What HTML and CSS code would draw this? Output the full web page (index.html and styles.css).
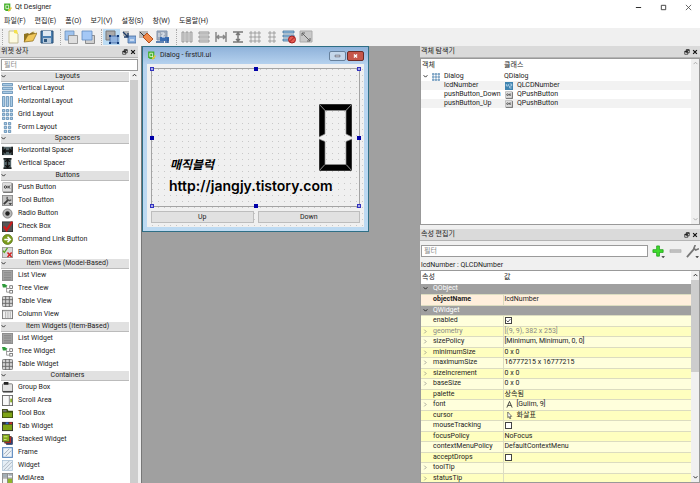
FILE: index.html
```html
<!DOCTYPE html>
<html lang="ko">
  <head>
    <meta charset="UTF-8" />
    <meta name="viewport" content="width=device-width, initial-scale=1.0" />
    <title>Qt Designer</title>
    <link rel="stylesheet" href="styles.css">
  </head>

  <body>
    <!-- shared icons -->
    <svg class="sprite" aria-hidden="true">
      <symbol id="i-qt" viewBox="0 0 16 16">
        <path d="M2 1h11v13H5l-3-3z" fill="#43b02a" />
        <path d="M5 4h5v6H5zM9 9l2 3" fill="none" stroke="#e8f7e0" stroke-width="1.5" />
        <path d="M9 13l5-6 2 2-5 6H9z" fill="#e8c93a" />
      </symbol>
      <symbol id="i-float" viewBox="0 0 8 8">
        <path d="M3 1h4v4H3zM1 3h4v4H1z" fill="#fff" stroke="#222" />
        <path d="M3 1.5h4M1 3.5h4" stroke="#222" stroke-width="1.5" />
      </symbol>
      <symbol id="i-close" viewBox="0 0 8 8"><path d="M1.5 1.5l5 5M6.5 1.5l-5 5" stroke="#111" stroke-width="1.6" /></symbol>
      <symbol id="i-down" viewBox="0 0 8 8"><path d="M1 2l3 3 3-3" fill="none" stroke="currentColor" stroke-width="1.5" /></symbol>
      <symbol id="i-up" viewBox="0 0 8 8"><path d="M1 5l3-3 3 3" fill="none" stroke="currentColor" stroke-width="1.5" /></symbol>
      <symbol id="i-right" viewBox="0 0 8 8"><path d="M2 1l3 3-3 3" fill="none" stroke="currentColor" /></symbol>

      <symbol id="i-vlayout" viewBox="0 0 12 12">
        <path d="M.5 .5h11v2.5H.5zM.5 4.7h11v2.5H.5zM.5 9h11v2.5H.5z" fill="#a9cbe6" stroke="#4f7fa8" stroke-width=".8" />
      </symbol>
      <symbol id="i-hlayout" viewBox="0 0 12 12">
        <path d="M.5 .5h2.5v11H.5zM4.7 .5h2.5v11H4.7zM9 .5h2.5v11H9z" fill="#a9cbe6" stroke="#4f7fa8" stroke-width=".8" />
      </symbol>
      <symbol id="i-grid" viewBox="0 0 12 12">
        <path d="M.5 .5H3V3H.5zM4.7 .5h2.5V3H4.7zM9 .5h2.5V3H9zM.5 4.7H3v2.5H.5zM4.7 4.7h2.5v2.5H4.7zM9 4.7h2.5v2.5H9zM.5 9H3v2.5H.5zM4.7 9h2.5v2.5H4.7zM9 9h2.5v2.5H9z" fill="#a9cbe6" stroke="#4f7fa8" stroke-width=".8" />
      </symbol>
      <symbol id="i-form" viewBox="0 0 12 12">
        <path d="M2.5 .5H5V3H2.5zM7 .5h2.5V3H7zM2.5 4.7H5v2.5H2.5zM7 4.7h2.5v2.5H7zM2.5 9H5v2.5H2.5zM7 9h2.5v2.5H7z" fill="#a9cbe6" stroke="#4f7fa8" stroke-width=".8" />
      </symbol>
      <symbol id="i-hspacer" viewBox="0 0 12 12">
        <path d="M0 2h12v9H0z" fill="#56666a" />
        <path d="M1 2v9M11 2v9M2 6.5h8M4 4L2 6.5 4 9M8 4l2 2.5L8 9" fill="none" stroke="#111" stroke-width="1.5" />
      </symbol>
      <symbol id="i-vspacer" viewBox="0 0 12 12">
        <path d="M2 0h8v12H2z" fill="#56666a" />
        <path d="M1.5 1h9M1.5 11h9M6 2v8M3.5 4L6 2l2.5 2M3.5 8L6 10l2.5-2" fill="none" stroke="#111" stroke-width="1.5" />
      </symbol>
      <symbol id="i-push" viewBox="0 0 12 12">
        <rect x="1" y="1" width="11" height="11" rx="1" fill="#777" />
        <rect x=".5" y=".5" width="10" height="10" rx="1" fill="#dedede" stroke="#999" stroke-width=".6" />
        <circle cx="3.8" cy="5.5" r="1.3" fill="none" stroke="#222" stroke-width=".9" />
        <path d="M6.5 4v3M9 4L7 5.5 9 7" fill="none" stroke="#222" stroke-width=".9" />
      </symbol>
      <symbol id="i-tool" viewBox="0 0 12 12">
        <rect x=".5" y=".5" width="11" height="11" fill="#c3c3c3" stroke="#8a8a8a" />
        <path d="M2 10l5-5" stroke="#3a3a3a" stroke-width="2" />
        <path d="M6 2a2.5 2.5 0 1 0 4 3" fill="none" stroke="#555" stroke-width="1.5" />
        <path d="M7 9h4l-2 2z" fill="#222" />
      </symbol>
      <symbol id="i-radio" viewBox="0 0 12 12">
        <circle cx="6" cy="6" r="5" fill="#b9b9b9" stroke="#7c7c7c" />
        <circle cx="6" cy="6" r="2.4" fill="#222" />
      </symbol>
      <symbol id="i-check" viewBox="0 0 12 12">
        <rect x=".5" y="1" width="11" height="10.5" fill="#555" stroke="#333" />
        <path d="M2 6l3 4 6-9" fill="none" stroke="#cf1b1b" stroke-width="2.4" />
      </symbol>
      <symbol id="i-command" viewBox="0 0 12 12">
        <circle cx="6" cy="6" r="5.5" fill="#7b9c1c" stroke="#4d6510" stroke-width=".7" />
        <path d="M2.5 6h6M6 3l3 3-3 3" fill="none" stroke="#fff" stroke-width="1.7" />
      </symbol>
      <symbol id="i-bbox" viewBox="0 0 12 12">
        <rect x=".5" y=".5" width="11" height="11" fill="#d8d8d8" stroke="#9a9a9a" />
        <path d="M1 4l1.5 2L6 1" fill="none" stroke="#57a51c" stroke-width="1.4" />
        <path d="M6 6l4.5 5M10.5 6L6 11" stroke="#d12222" stroke-width="1.6" />
      </symbol>
      <symbol id="i-list" viewBox="0 0 12 12">
        <rect x=".5" y=".5" width="11" height="11" fill="#a5a5a5" stroke="#8a8a8a" />
        <path d="M2 3h8M2 5.5h8M2 8h8M2 10h8" stroke="#7b7b7b" stroke-width=".8" />
      </symbol>
      <symbol id="i-tree" viewBox="0 0 12 12">
        <path d="M0 1h3l3 2-2 2H1z" fill="#2d9a3a" />
        <path d="M5 4v6h3M5 6h3" fill="none" stroke="#777" stroke-width=".8" />
        <rect x="8.5" y="3" width="3" height="3" fill="#fff" stroke="#555" stroke-width=".8" />
        <rect x="8.5" y="8" width="3" height="3" fill="#fff" stroke="#555" stroke-width=".8" />
      </symbol>
      <symbol id="i-table" viewBox="0 0 12 12">
        <rect x=".5" y=".5" width="11" height="11" rx="1" fill="#d2d2d2" stroke="#777" />
        <path d="M4 0v12M8 0v12M0 4h12M0 8h12" stroke="#666" />
      </symbol>
      <symbol id="i-column" viewBox="0 0 12 12">
        <rect x=".5" y="1.5" width="11" height="9" fill="#f1f1f1" stroke="#777" />
        <path d="M4 3v7M6.5 3v7M9 3v7" stroke="#aaa" />
        <path d="M1 2h10" stroke="#999" />
      </symbol>
      <symbol id="i-group" viewBox="0 0 12 12">
        <rect x=".5" y="2" width="11" height="9" rx="1" fill="#e2e2e2" stroke="#777" />
        <path d="M2 0h5v3H2z" fill="#222" />
        <path d="M1 10.5h11" stroke="#444" stroke-width="1.5" />
      </symbol>
      <symbol id="i-scroll" viewBox="0 0 12 12">
        <rect x=".5" y=".5" width="11" height="11" fill="#f8f8f8" stroke="#666" />
        <path d="M8 1v10" stroke="#666" stroke-width=".8" />
        <path d="M9 4h2v4H9z" fill="#86ab22" />
      </symbol>
      <symbol id="i-toolbox" viewBox="0 0 12 12">
        <path d="M0 1h6l1 2h5v8H0z" fill="#3c4a10" />
        <path d="M1 2h4v2H1z" fill="#777" />
        <path d="M1 5h10v5H1z" fill="#7ea316" />
      </symbol>
      <symbol id="i-tab" viewBox="0 0 12 12">
        <path d="M0 1h12v10H0z" fill="#333" />
        <path d="M4 1.5h3v2H4z" fill="#2f66c8" /><path d="M8 1.5h3v2H8z" fill="#d12a2a" />
        <path d="M1 4h10v6H1z" fill="#7ea316" />
      </symbol>
      <symbol id="i-stacked" viewBox="0 0 12 12">
        <rect x="5" y="4" width="6.5" height="7.5" fill="#2a53b8" stroke="#222" stroke-width=".6" />
        <rect x="3" y="2.5" width="7" height="7.5" fill="#c9301f" stroke="#222" stroke-width=".6" />
        <rect x=".5" y=".5" width="7.5" height="8" fill="#83aa19" stroke="#333" stroke-width=".7" />
        <path d="M2 3h4M2 6h3" stroke="#d6e88a" />
      </symbol>
      <symbol id="i-frame" viewBox="0 0 12 12">
        <rect x=".7" y=".7" width="10.6" height="10.6" fill="#eef3f8" stroke="#5a87bd" stroke-width="1.2" />
        <path d="M2 8l6-6M4 10l6-6" stroke="#9aa6b3" />
      </symbol>
      <symbol id="i-widget" viewBox="0 0 12 12">
        <rect x=".5" y=".5" width="11" height="11" fill="#e6eef5" stroke="#a7bfd6" stroke-width=".8" />
        <path d="M1 8l7-7M2 11l9-9M6 11l5-5" stroke="#aab4be" />
      </symbol>
      <symbol id="i-mdi" viewBox="0 0 12 12">
        <rect x=".5" y=".5" width="11" height="11" fill="#f4f4f4" stroke="#888" />
        <path d="M1 1h5v4H1zM7 1h4v2H7z" fill="#a3aeb5" /><path d="M6 6h5v5H6z" fill="#8fb32b" />
        <path d="M6 1v10M1 5.5h10" stroke="#777" stroke-width=".8" />
      </symbol>
    </svg>

    <div class="app">
      <header class="titlebar">
        <svg class="icon-sm"><use href="#i-qt" /></svg>
        <h1>Qt Designer</h1>
        <div class="win-buttons">
          <button aria-label="최소화"><svg viewBox="0 0 8 8"><path d="M1 4h6" stroke="#111" /></svg></button>
          <button aria-label="최대화"><svg viewBox="0 0 8 8"><path d="M1.5 1.5h5v5h-5z" fill="none" stroke="#333" /></svg></button>
          <button aria-label="닫기"><svg viewBox="0 0 8 8"><path d="M1 1l6 6M7 1L1 7" stroke="#444" stroke-width=".9" /></svg></button>
        </div>
      </header>

      <nav class="menubar">
        <button>파일(F)</button>
        <button>편집(E)</button>
        <button>폼(O)</button>
        <button>보기(V)</button>
        <button>설정(S)</button>
        <button>창(W)</button>
        <button>도움말(H)</button>
      </nav>

      <div class="toolbar">
        <div class="tools">
          <button aria-label="새 폼"><svg viewBox="0 0 14 14"><path d="M3 1h6l3 3v9H3z" fill="#fdfbe0" stroke="#b5ae83" stroke-width=".8" /><path d="M8 0h3l1 4-4-1z" fill="#f3e14c" /></svg></button>
          <button aria-label="열기"><svg viewBox="0 0 14 14"><path d="M1 12V4l4-1 1 1 5-3 1 3z" fill="#8e7322" /><path d="M1 12l4-7 9-2-4 8z" fill="#efc75a" stroke="#8d6b1a" stroke-width=".7" /><path d="M9 2l4-2v3" fill="#f4f0d2" /></svg></button>
          <button aria-label="저장"><svg viewBox="0 0 14 14"><path d="M1 1h12v12H1z" fill="#4b7fb0" stroke="#274d73" /><path d="M3 1h8v5H3z" fill="#dfe9f2" /><path d="M3 8h8v5H3z" fill="#b5c8da" /><path d="M4 9h3v3H4z" fill="#30577d" /></svg></button>
        </div>
        <div class="tools">
          <button aria-label="뒤로 보내기"><svg viewBox="0 0 14 14"><path d="M1 1h9v9H1z" fill="#9fc3ee" stroke="#6a8fbd" stroke-width=".8" /><path d="M4.5 5.5h9v8h-9z" fill="#dedede" stroke="#888" stroke-width=".8" /></svg></button>
          <button aria-label="앞으로 가져오기"><svg viewBox="0 0 14 14"><path d="M4.5 5.5h9v8h-9z" fill="#d0d0d0" stroke="#777" stroke-width=".8" /><path d="M1 1h10v9H1z" fill="#a4c8f6" stroke="#5f8bc2" stroke-width=".8" /></svg></button>
        </div>
        <div class="tools">
          <button class="on" aria-label="위젯 편집"><svg viewBox="0 0 14 14"><path d="M1 1h9v9H1z" fill="#aaa" stroke="#777" /><path d="M5 6h8v7H5z" fill="#8fb2de" stroke="#3c62a0" stroke-width=".8" /><path d="M4 5h2v2H4zM12 5h2v2h-2zM4 12h2v2H4zM12 12h2v2h-2z" fill="#123a78" /></svg></button>
          <button aria-label="시그널/슬롯 편집"><svg viewBox="0 0 14 14"><path d="M1 1h6v5H1z" fill="#b8b8b8" /><path d="M6 6h8v7H6z" fill="#8ab0e0" stroke="#456a9c" stroke-width=".8" /><path d="M1 2l5 5M6 3v4H2" fill="none" stroke="#1e3b66" stroke-width="1.3" /><path d="M8 10h4" stroke="#fff" /></svg></button>
          <button aria-label="버디 편집"><svg viewBox="0 0 14 14"><path d="M0 1h9v7H0z" fill="#b9b9b9" /><path d="M4 7l4-4 6 6-4 4z" fill="#f08a4b" stroke="#b4501d" /><path d="M1 2l4 4" stroke="#333" /></svg></button>
          <button aria-label="탭 순서 편집"><svg viewBox="0 0 14 14"><path d="M1 1h10v9H1z" fill="#a0abba" stroke="#8296b1" /><path d="M4 7h9v4H4z" fill="#3c6fb4" /><path d="M0 12h8M12 8v5M9 12h3" stroke="#2f5f9f" stroke-width="1.5" /><path d="M3 3v4M5 3h3v2H6v2h3" fill="none" stroke="#e8eef6" /></svg></button>
        </div>
        <div class="tools">
          <button aria-label="수평 배치"><svg viewBox="0 0 14 14"><path d="M2 2h2v10H2zM6 2h2v10H6zM10 2h2v10h-2z" fill="#ddd" stroke="#999" /></svg></button>
          <button aria-label="수직 배치"><svg viewBox="0 0 14 14"><path d="M2 2h10v2H2zM2 6h10v2H2zM2 10h10v2H2z" fill="#ddd" stroke="#999" /></svg></button>
          <button aria-label="스플리터 수평 배치"><svg viewBox="0 0 14 14"><path d="M2 2v10M12 2v10M2 7h10M5 5L3 7l2 2M9 5l2 2-2 2" fill="none" stroke="#888" stroke-width="1.5" /></svg></button>
          <button aria-label="스플리터 수직 배치"><svg viewBox="0 0 14 14"><path d="M2 2h10M2 12h10M7 2v10M5 5l2-2 2 2M5 9l2 2 2-2" fill="none" stroke="#777" stroke-width="1.5" /></svg></button>
          <button aria-label="격자 배치"><svg viewBox="0 0 14 14"><path d="M2 2h2v2H2zM6 2h2v2H6zM10 2h2v2h-2zM2 6h2v2H2zM6 6h2v2H6zM10 6h2v2h-2zM2 10h2v2H2zM6 10h2v2H6zM10 10h2v2h-2z" fill="#ddd" stroke="#a5a5a5" /></svg></button>
          <button aria-label="폼 배치"><svg viewBox="0 0 14 14"><path d="M4 2h2v2H4zM8 2h2v2H8zM4 6h2v2H4zM8 6h2v2H8zM4 10h2v2H4zM8 10h2v2H8z" fill="#ddd" stroke="#a5a5a5" /></svg></button>
          <button aria-label="배치 해제"><svg viewBox="0 0 14 14"><path d="M1 1h11v2H1zM1 5h11v2H1zM1 9h11v2H1z" fill="#9cc4e4" stroke="#41719b" stroke-width=".8" /><circle cx="10" cy="9.5" r="3.5" fill="#e45a50" stroke="#a41f1f" /><path d="M7.5 12l5-5" stroke="#a41f1f" /></svg></button>
          <button aria-label="크기 조정"><svg viewBox="0 0 14 14"><path d="M1 1h12v11H1z" fill="#c9c9c9" stroke="#aaa" /><path d="M3 3l8 8M3 6V3h3M11 8v3H8" fill="none" stroke="#666" /></svg></button>
        </div>
      </div>

      <main class="workspace">
        <aside class="dock widget-box">
          <div class="dock-title">
            <h2>위젯 상자</h2>
            <button aria-label="분리"><svg><use href="#i-float" /></svg></button>
            <button aria-label="닫기"><svg><use href="#i-close" /></svg></button>
          </div>
          <input class="filter" type="text" placeholder="필터" aria-label="위젯 필터" />
          <div class="scroll-row">
            <div class="categories">
              <button class="category"><svg><use href="#i-down" /></svg><span>Layouts</span></button>
              <ul>
                <li><svg><use href="#i-vlayout" /></svg>Vertical Layout</li>
                <li><svg><use href="#i-hlayout" /></svg>Horizontal Layout</li>
                <li><svg><use href="#i-grid" /></svg>Grid Layout</li>
                <li><svg><use href="#i-form" /></svg>Form Layout</li>
              </ul>
              <button class="category"><svg><use href="#i-down" /></svg><span>Spacers</span></button>
              <ul>
                <li><svg><use href="#i-hspacer" /></svg>Horizontal Spacer</li>
                <li><svg><use href="#i-vspacer" /></svg>Vertical Spacer</li>
              </ul>
              <button class="category"><svg><use href="#i-down" /></svg><span>Buttons</span></button>
              <ul>
                <li><svg><use href="#i-push" /></svg>Push Button</li>
                <li><svg><use href="#i-tool" /></svg>Tool Button</li>
                <li><svg><use href="#i-radio" /></svg>Radio Button</li>
                <li><svg><use href="#i-check" /></svg>Check Box</li>
                <li><svg><use href="#i-command" /></svg>Command Link Button</li>
                <li><svg><use href="#i-bbox" /></svg>Button Box</li>
              </ul>
              <button class="category"><svg><use href="#i-down" /></svg><span>Item Views (Model-Based)</span></button>
              <ul>
                <li><svg><use href="#i-list" /></svg>List View</li>
                <li><svg><use href="#i-tree" /></svg>Tree View</li>
                <li><svg><use href="#i-table" /></svg>Table View</li>
                <li><svg><use href="#i-column" /></svg>Column View</li>
              </ul>
              <button class="category"><svg><use href="#i-down" /></svg><span>Item Widgets (Item-Based)</span></button>
              <ul>
                <li><svg><use href="#i-list" /></svg>List Widget</li>
                <li><svg><use href="#i-tree" /></svg>Tree Widget</li>
                <li><svg><use href="#i-table" /></svg>Table Widget</li>
              </ul>
              <button class="category"><svg><use href="#i-down" /></svg><span>Containers</span></button>
              <ul>
                <li><svg><use href="#i-group" /></svg>Group Box</li>
                <li><svg><use href="#i-scroll" /></svg>Scroll Area</li>
                <li><svg><use href="#i-toolbox" /></svg>Tool Box</li>
                <li><svg><use href="#i-tab" /></svg>Tab Widget</li>
                <li><svg><use href="#i-stacked" /></svg>Stacked Widget</li>
                <li><svg><use href="#i-frame" /></svg>Frame</li>
                <li><svg><use href="#i-widget" /></svg>Widget</li>
                <li><svg><use href="#i-mdi" /></svg>MdiArea</li>
              </ul>
            </div>
            <div class="scrollbar">
              <svg><use href="#i-up" /></svg>
              <div class="thumb full"></div>
            </div>
          </div>
        </aside>

        <section class="mdi">
          <div class="form-window">
            <div class="form-title">
              <svg class="icon-sm"><use href="#i-qt" /></svg>
              <h2>Dialog - firstUI.ui</h2>
              <button class="min" aria-label="최소화"><svg viewBox="0 0 16 10"><path d="M5 4h6v2H5z" fill="#fff" stroke="#445" stroke-width=".8" /></svg></button>
              <button class="close" aria-label="닫기"><svg viewBox="0 0 16 10"><path d="M6 3l4 4M10 3L6 7" stroke="#fff" stroke-width="1.7" /></svg></button>
            </div>
            <div class="form-body">
              <div class="lcd">
                <i class="handle nw"></i><i class="handle n"></i><i class="handle ne"></i>
                <i class="handle w"></i><i class="handle e"></i>
                <i class="handle sw"></i><i class="handle s"></i><i class="handle se"></i>
                <div class="mark">
                  <span>매직블럭</span>
                  <a href="http://jangjy.tistory.com">http://jangjy.tistory.com</a>
                </div>
                <svg class="digit" viewBox="0 0 33 67" aria-label="0">
                  <g fill="#000" stroke="#8f8f8f" stroke-width=".7">
                    <path d="M0 0h33l-6 6.5H6z" />
                    <path d="M0 0l6 6.5V30l-6 3z" />
                    <path d="M33 0v33l-6-3V6.5z" />
                    <path d="M0 35l6 2.5v23L0 67z" />
                    <path d="M33 35v32l-6-6.5v-23z" />
                    <path d="M6 60.5h21l6 6.5H0z" />
                  </g>
                </svg>
              </div>
              <div class="form-buttons">
                <button>Up</button>
                <button>Down</button>
              </div>
            </div>
          </div>
        </section>

        <aside class="right">
          <section class="dock inspector">
            <div class="dock-title">
              <h2>객체 탐색기</h2>
              <button aria-label="분리"><svg><use href="#i-float" /></svg></button>
              <button aria-label="닫기"><svg><use href="#i-close" /></svg></button>
            </div>
            <div class="scroll-row framed">
              <table class="objects">
                <thead>
                  <tr><th>객체</th><th>클래스</th></tr>
                </thead>
                <tbody>
                  <tr>
                    <td><div class="root"><svg class="arrow"><use href="#i-down" /></svg><svg><use href="#i-grid" /></svg>Dialog</div></td>
                    <td>QDialog</td>
                  </tr>
                  <tr>
                    <td class="child">lcdNumber</td>
                    <td><div class="cls"><svg viewBox="0 0 12 12"><path d="M0 0h12v12H0z" fill="#3f83b0" /><path d="M2 3v3h3V3M7 3h3v3H7v3h3" fill="none" stroke="#d5ecfa" /></svg>QLCDNumber</div></td>
                  </tr>
                  <tr>
                    <td class="child">pushButton_Down</td>
                    <td><div class="cls"><svg><use href="#i-push" /></svg>QPushButton</div></td>
                  </tr>
                  <tr>
                    <td class="child">pushButton_Up</td>
                    <td><div class="cls"><svg><use href="#i-push" /></svg>QPushButton</div></td>
                  </tr>
                </tbody>
              </table>
              <div class="scrollbar idle">
                <svg><use href="#i-up" /></svg>
                <div class="space"></div>
                <svg><use href="#i-down" /></svg>
              </div>
            </div>
          </section>

          <section class="dock properties">
            <div class="dock-title">
              <h2>속성 편집기</h2>
              <button aria-label="분리"><svg><use href="#i-float" /></svg></button>
              <button aria-label="닫기"><svg><use href="#i-close" /></svg></button>
            </div>
            <div class="filter-row">
              <input class="filter" type="text" placeholder="필터" aria-label="속성 필터" />
              <button aria-label="추가"><svg viewBox="0 0 14 14"><path d="M5 1h3v4h4v3H8v4H5V8H1V5h4z" fill="#3fdc2c" stroke="#1a9c14" stroke-width=".8" /><path d="M10 12h4l-2 2z" fill="#222" /></svg></button>
              <button aria-label="제거"><svg viewBox="0 0 14 14"><path d="M1 5h12v3H1z" fill="#c2c2c2" stroke="#a8a8a8" stroke-width=".6" /></svg></button>
              <button aria-label="설정"><svg viewBox="0 0 14 14"><path d="M1 13l8-9" stroke="#777" stroke-width="2" /><path d="M10 0L8.5 3.5 10.5 5.5 14 4" fill="none" stroke="#777" stroke-width="1.8" /><path d="M10 12h4l-2 2z" fill="#222" /></svg></button>
            </div>
            <p class="selected">lcdNumber : QLCDNumber</p>
            <div class="scroll-row framed">
              <div class="props-wrap">
                <table class="props">
                  <thead>
                    <tr><th>속성</th><th>값</th></tr>
                  </thead>
                  <tbody>
                    <tr class="group"><th colspan="2"><svg><use href="#i-down" /></svg>QObject</th></tr>
                    <tr class="changed"><td>objectName</td><td>lcdNumber</td></tr>
                    <tr class="group"><th colspan="2"><svg><use href="#i-down" /></svg>QWidget</th></tr>
                    <tr><td><label for="enabled">enabled</label></td><td><input id="enabled" type="checkbox" checked /></td></tr>
                    <tr class="off"><td><svg><use href="#i-right" /></svg>geometry</td><td>[(9, 9), 382 x 253]</td></tr>
                    <tr><td><svg><use href="#i-right" /></svg>sizePolicy</td><td>[Minimum, Minimum, 0, 0]</td></tr>
                    <tr><td><svg><use href="#i-right" /></svg>minimumSize</td><td>0 x 0</td></tr>
                    <tr><td><svg><use href="#i-right" /></svg>maximumSize</td><td>16777215 x 16777215</td></tr>
                    <tr><td><svg><use href="#i-right" /></svg>sizeIncrement</td><td>0 x 0</td></tr>
                    <tr><td><svg><use href="#i-right" /></svg>baseSize</td><td>0 x 0</td></tr>
                    <tr><td>palette</td><td>상속됨</td></tr>
                    <tr><td><svg><use href="#i-right" /></svg>font</td><td><div class="val"><svg viewBox="0 0 8 8"><path d="M1 7.5L4 .5l3 7M2 5h4" fill="none" stroke="#222" stroke-width=".9" /></svg>[Gulim, 9]</div></td></tr>
                    <tr><td>cursor</td><td><div class="val"><svg viewBox="0 0 8 8"><path d="M2 0v6.5l1.5-1.3L4.5 8l1-.5-1-2.5h2z" fill="#fff" stroke="#333" stroke-width=".7" /></svg>화살표</div></td></tr>
                    <tr><td><label for="tracking">mouseTracking</label></td><td><input id="tracking" type="checkbox" /></td></tr>
                    <tr><td>focusPolicy</td><td>NoFocus</td></tr>
                    <tr><td>contextMenuPolicy</td><td>DefaultContextMenu</td></tr>
                    <tr><td><label for="drops">acceptDrops</label></td><td><input id="drops" type="checkbox" /></td></tr>
                    <tr><td><svg><use href="#i-right" /></svg>toolTip</td><td></td></tr>
                    <tr><td><svg><use href="#i-right" /></svg>statusTip</td><td></td></tr>
                  </tbody>
                </table>
              </div>
              <div class="scrollbar">
                <svg><use href="#i-up" /></svg>
                <div class="thumb"></div>
                <div class="space"></div>
                <svg><use href="#i-down" /></svg>
              </div>
            </div>
          </section>
        </aside>
      </main>
    </div>
  </body>
</html>
```

FILE: styles.css
```css
* {
  margin: 0;
  padding: 0;
  box-sizing: border-box;
}

body {
  font-family: Roboto, "Noto Sans CJK KR", sans-serif;
  font-size: 7px;
  line-height: 9px;
  color: #222;
  background: #f0f0f0;
}

button {
  font: inherit;
  color: inherit;
  border: none;
  background: none;
}

h1,
h2,
th {
  font-size: 7px;
  font-weight: normal;
  text-align: left;
}

svg {
  display: block;
  flex: none;
}

ul {
  list-style: none;
}

.sprite {
  display: none;
}

.icon-sm {
  width: 9px;
  height: 9px;
}

.app {
  display: flex;
  flex-direction: column;
  height: 100vh;
  overflow: hidden;
}

/* title bar and menu */
.titlebar {
  display: flex;
  align-items: center;
  gap: 3px;
  height: 14px;
  padding: 0 8px 0 3px;
  background: #fff;
}

.titlebar h1 {
  flex: 1;
}

.win-buttons {
  display: flex;
  gap: 18px;
}

.win-buttons svg {
  width: 7px;
  height: 7px;
}

.menubar {
  display: flex;
  gap: 9px;
  height: 14px;
  padding: 0 4px;
  background: #fff;
}

.toolbar {
  display: flex;
  height: 18px;
  padding: 1px 2px;
  background: #f0f0f0;
}

.tools {
  display: flex;
  align-items: center;
  margin-right: 5px;
  padding-left: 1px;
  border-left: 1px dotted #aaa;
}

.tools button {
  display: flex;
  align-items: center;
  justify-content: center;
  width: 17px;
  height: 16px;
}

.tools button.on {
  background: #bcdcf4;
}

.tools svg {
  width: 14px;
  height: 14px;
}

/* docks */
.workspace {
  display: flex;
  flex: 1;
  min-height: 0;
}

.dock {
  display: flex;
  flex-direction: column;
  min-height: 0;
}

.dock-title {
  display: flex;
  align-items: center;
  gap: 2px;
  flex: none;
  height: 12px;
  padding: 0 2px 0 1px;
  background: #dadada;
  border-bottom: 1px solid #b4b4b4;
}

.dock-title h2 {
  flex: 1;
}

.dock-title svg {
  width: 6px;
  height: 6px;
}

.filter {
  height: 12px;
  padding: 0 2px;
  font: inherit;
  color: #222;
  background: #fff;
  border: 1px solid #9a9a9a;
}

.filter::placeholder {
  color: #888;
}

.scroll-row {
  display: flex;
  flex: 1;
  min-height: 0;
}

.scrollbar {
  display: flex;
  flex-direction: column;
  align-items: center;
  flex: none;
  width: 8px;
  background: #f0f0f0;
}

.scrollbar svg {
  width: 5px;
  height: 5px;
  margin: 2px 0;
}

.thumb {
  width: 100%;
  height: 92px;
  background: #cdcdcd;
}

.thumb.full {
  flex: 1;
}

.space {
  flex: 1;
}

.idle {
  color: #aaa;
}

/* widget box */
.widget-box {
  flex: none;
  width: 142px;
  padding-right: 3px;
  border-right: 1px solid #777;
}

.widget-box .filter {
  flex: none;
  margin: 1px 0 0 1px;
}

.categories {
  flex: 1;
  padding: 0 1px;
  overflow: hidden;
  background: #fff;
}

.category {
  display: flex;
  align-items: center;
  width: 100%;
  height: 10px;
  background: #e1e1e1;
  border-bottom: 1px solid #bbb;
}

.category:nth-of-type(odd) {
  margin-top: 1px;
}

.category svg {
  width: 5px;
  height: 5px;
}

.category span {
  flex: 1;
}

.categories li {
  display: flex;
  align-items: center;
  gap: 5px;
  height: 13px;
  padding-left: 1px;
}

.categories li svg {
  width: 11px;
  height: 11px;
}

/* form window */
.mdi {
  flex: 1;
  background: #a0a0a0;
}

.form-window {
  width: 227px;
  padding: 0 4px 4px;
  background: linear-gradient(#8fb2da, #b7d3ef 18px, #bddaf2);
  border: 1px solid #2f6f86;
}

.form-title {
  display: flex;
  align-items: center;
  gap: 4px;
  height: 17px;
}

.form-title h2 {
  flex: 1;
}

.form-title button {
  height: 10px;
  border: 1px solid #66809c;
  border-radius: 2px;
}

.form-title button svg {
  width: 15px;
  height: 8px;
}

.form-title .min {
  margin-right: -3px;
  background: #c5d7ea;
}

.form-title .close {
  background: #c6564a;
  border-color: #6d2b26;
}

.form-body {
  padding: 4px;
  background-image: linear-gradient(90deg, #f0f0f0 5px, transparent 5px),
    linear-gradient(#f0f0f0 5px, #c8c8c8 5px);
  background-size: 6px 6px;
}

.lcd {
  position: relative;
  display: flex;
  align-items: flex-end;
  justify-content: space-between;
  height: 139px;
  padding: 0 7px 12px 17px;
  border: 1px solid #a4a4a4;
}

.handle {
  position: absolute;
  width: 4px;
  height: 4px;
  margin: -2px;
  background: #0000a8;
}

.nw,
.ne,
.sw,
.se {
  background: #a9a9e6;
  border: 1px solid #3333c0;
}

.nw,
.n,
.ne {
  top: 0;
}

.w,
.e {
  top: 50%;
}

.sw,
.s,
.se {
  top: 100%;
}

.nw,
.w,
.sw {
  left: 0;
}

.n,
.s {
  left: 50%;
}

.ne,
.e,
.se {
  left: 100%;
}

.mark {
  display: flex;
  flex-direction: column;
  gap: 5px;
  width: 0;
  white-space: nowrap;
  color: #000;
}

.mark span {
  padding-left: 1px;
  font-family: "Noto Sans CJK KR", sans-serif;
  font-size: 12px;
  font-style: italic;
  font-weight: bold;
  line-height: 18px;
}

.mark a {
  font-family: Inter, sans-serif;
  font-size: 14px;
  font-weight: 600;
  line-height: 16px;
  color: inherit;
  text-decoration: none;
}

.digit {
  width: 33px;
  height: 67px;
  margin-bottom: 23px;
}

.form-buttons {
  display: flex;
  gap: 4px;
  margin-top: 4px;
}

.form-buttons button {
  flex: 1;
  height: 12px;
  background: #e1e1e1;
  border: 1px solid #bdbdbd;
}

/* right side */
.right {
  display: flex;
  flex-direction: column;
  flex: none;
  width: 40%;
}

.inspector {
  flex: 0 0 41%;
  margin-bottom: 4px;
}

.properties {
  flex: 1;
}

.framed {
  background: #fff;
  border: 1px solid #999;
}

table {
  width: 100%;
  border-collapse: collapse;
  table-layout: fixed;
}

.objects {
  flex: 1;
  align-self: flex-start;
}

.objects th {
  height: 13px;
  padding-left: 1px;
}

.objects th:first-child,
.props th:first-child {
  width: 82px;
}

.objects td {
  height: 9px;
  padding-left: 1px;
}

.objects tbody tr:nth-child(even) {
  background: #f2f2f2;
}

.objects svg {
  width: 8px;
  height: 8px;
}

.objects .arrow {
  width: 5px;
  height: 5px;
}

.objects .child {
  padding-left: 23px;
}

.root,
.cls {
  display: flex;
  align-items: center;
  gap: 4px;
  padding-left: 1px;
}

.filter-row {
  display: flex;
  align-items: center;
  flex: none;
  gap: 4px;
  height: 20px;
  padding: 0 1px;
}

.filter-row .filter {
  flex: 1;
}

.filter-row svg {
  width: 13px;
  height: 13px;
}

.selected {
  flex: none;
  padding: 0 1px;
}

.props-wrap {
  flex: 1;
  overflow: hidden;
}

.props thead th {
  height: 13px;
  padding-left: 1px;
}

.props tbody td,
.props tbody th {
  height: 10px;
  line-height: 9px;
  padding-left: 1px;
  border-bottom: 1px solid #dcdcc0;
}

.props tbody tr:nth-child(even) td {
  height: 11px;
  background: #ffffdc;
}

.props tbody tr:nth-child(odd) td {
  background: #ffffbf;
}

.props tbody tr.changed td {
  background: #ffefdc;
}

.changed td:first-child {
  font-weight: bold;
}

.props tbody td:first-child {
  padding-left: 12px;
  border-right: 1px solid #dcdcc0;
}

.props tbody .group th {
  padding-left: 12px;
  color: #fff;
  background: #a0a0a0;
}

.props td > svg,
.props th > svg {
  float: left;
  width: 5px;
  height: 5px;
  margin: 2px 0 0 -10px;
  color: #777;
}

.props th > svg {
  color: #222;
}

.props .off td {
  color: #888;
}

.val {
  display: flex;
  align-items: center;
  gap: 4px;
  padding-left: 1px;
}

.val svg {
  width: 7px;
  height: 7px;
}

.props input {
  display: block;
  appearance: none;
  width: 7px;
  height: 7px;
  background: #fff;
  border: 1px solid #444;
}

.props input:checked {
  background: #fff url("data:image/svg+xml,%3Csvg xmlns='http://www.w3.org/2000/svg' viewBox='0 0 5 5'%3E%3Cpath d='M.5 2.5L2 4l2.5-3' fill='none' stroke='%23333' stroke-width='.8'/%3E%3C/svg%3E");
}
```
